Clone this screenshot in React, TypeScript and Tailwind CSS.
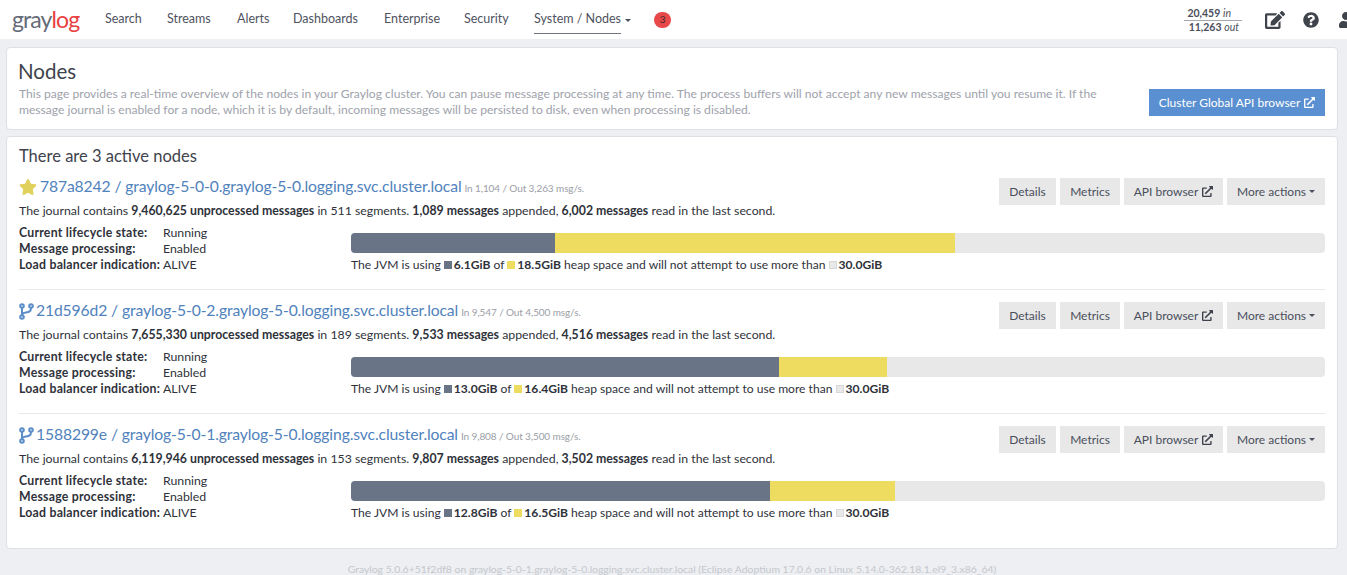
import { FaEdit, FaQuestionCircle, FaUser, FaStar, FaExternalLinkAlt } from "react-icons/fa";

const navItems = [
  { label: "Search", w: "w-[62px]" },
  { label: "Streams", w: "w-[70px]" },
  { label: "Alerts", w: "w-[56px]" },
  { label: "Dashboards", w: "w-[91px]" },
  { label: "Enterprise", w: "w-[80px]" },
  { label: "Security", w: "w-[70px]" },
];

const nodes = [
  {
    id: "787a8242",
    host: "graylog-5-0-0.graylog-5-0.logging.svc.cluster.local",
    leader: true,
    rate: "In 1,104 / Out 3,263 msg/s.",
    unprocessed: "9,460,625",
    segments: "511",
    appended: "1,089",
    read: "6,002",
    used: "6.1GiB",
    committed: "18.5GiB",
    usedPct: 20.9,
    committedPct: 41.1,
  },
  {
    id: "21d596d2",
    host: "graylog-5-0-2.graylog-5-0.logging.svc.cluster.local",
    leader: false,
    rate: "In 9,547 / Out 4,500 msg/s.",
    unprocessed: "7,655,330",
    segments: "189",
    appended: "9,533",
    read: "4,516",
    used: "13.0GiB",
    committed: "16.4GiB",
    usedPct: 43.9,
    committedPct: 11.1,
  },
  {
    id: "1588299e",
    host: "graylog-5-0-1.graylog-5-0.logging.svc.cluster.local",
    leader: false,
    rate: "In 9,808 / Out 3,500 msg/s.",
    unprocessed: "6,119,946",
    segments: "153",
    appended: "9,807",
    read: "3,502",
    used: "12.8GiB",
    committed: "16.5GiB",
    usedPct: 43,
    committedPct: 12.9,
  },
];

const btn =
  "h-[27px] flex items-center justify-center bg-[#e8e8e8] text-[12px] text-[#4a4f5c] whitespace-nowrap";

const BranchIcon = () => (
  <svg viewBox="0 0 15 17" className="w-[15px] h-[17px] mr-[2px] self-center" fill="none" stroke="#5b8dc9" strokeWidth="2">
    <circle cx="3" cy="3" r="1.8" />
    <circle cx="3" cy="14" r="1.8" />
    <circle cx="12" cy="3" r="1.8" />
    <path d="M3 5v7M12 5c0 3.500-2 4-5 4.500-2 .3-4 .8-4 2.500" />
  </svg>
);

const Node = ({ node, last }: { node: (typeof nodes)[number]; last: boolean }) => (
  <div className={last ? "pt-[8px] h-[123px]" : "pt-[8px] h-[124px] border-b border-[#e8e8e8]"}>
    <div className="flex justify-between">
      <div>
        <div className="flex items-baseline h-[24px] mt-[1px]">
          {node.leader ? (
            <FaStar className="text-[#dfd15b] text-[18px] mr-[3px] self-center" />
          ) : (
            <BranchIcon />
          )}
          <span className="text-[15.7px] text-[#5082bc] tracking-[-0.12px]">
            {node.id} / {node.host}
          </span>
          <span className="text-[10px] text-[#9a9ea6] ml-[3px] tracking-[-0.1px]">{node.rate}</span>
        </div>
        <p className="text-[12.3px] leading-[18px] mt-[3px] text-[#2f323a] whitespace-nowrap">
          The journal contains <b>{node.unprocessed} unprocessed messages</b> in {node.segments} segments.{" "}
          <b>{node.appended} messages</b> appended, <b>{node.read} messages</b> read in the last second.
        </p>
      </div>
      <div className="flex gap-[4px] mt-[4px] shrink-0">
        <div className={`${btn} w-[57px]`}>Details</div>
        <div className={`${btn} w-[60px]`}>Metrics</div>
        <div className={`${btn} w-[99px]`}>
          API browser
          <FaExternalLinkAlt className="ml-[4px] text-[11px] text-[#3d414c]" />
        </div>
        <div className={`${btn} w-[98px]`}>
          More actions
          <span className="ml-[3px] border-x-[3px] border-t-[3px] border-x-transparent border-t-[#4a4f5c]" />
        </div>
      </div>
    </div>
    <div className="flex mt-[5px]">
      <div className="w-[332px] shrink-0 grid grid-cols-[144px_1fr] text-[12.3px] leading-[16px] text-[#2f323a] content-start whitespace-nowrap">
        <b className="tracking-[0.22px]">Current lifecycle state:</b>
        <span>Running</span>
        <b className="tracking-[0.22px]">Message processing:</b>
        <span>Enabled</span>
        <b className="tracking-[0.22px]">Load balancer indication:</b>
        <span>ALIVE</span>
      </div>
      <div className="flex-1 pt-[8px]">
        <div className="h-[20px] flex rounded-[4px] overflow-hidden bg-[#e8e8e8]">
          <div className="bg-[#697586]" style={{ width: `${node.usedPct}%` }} />
          <div className="bg-[#eedc60]" style={{ width: `${node.committedPct}%` }} />
        </div>
        <p className="mt-[3px] text-[12.1px] leading-[18px] text-[#2f323a] flex items-center whitespace-pre">
          The JVM is using <span className="w-[8px] h-[8px] mr-[2px] bg-[#697586]" />
          <b>{node.used}</b> of <span className="w-[8px] h-[8px] mr-[2px] bg-[#eedc60]" />
          <b>{node.committed}</b> heap space and will not attempt to use more than{" "}
          <span className="w-[8px] h-[8px] mr-[2px] bg-[#e8e8e8] border border-[#d8d8d8]" />
          <b>30.0GiB</b>
        </p>
      </div>
    </div>
  </div>
);

export default function App() {
  return (
    <div className="h-[575px] overflow-hidden bg-[#eeeff2] font-['Lato','Noto_Sans',sans-serif]">
      <nav className="h-[39px] bg-white flex items-center pl-[12px]">
        <span className="w-[93px] text-[23px] tracking-[-0.9px] text-[#656b78]">
          gray<span className="text-[#e8413f]">log</span>
        </span>
        {navItems.map((item) => (
          <span key={item.label} className={`${item.w} text-[12.5px] text-[#4f5361] whitespace-nowrap`}>
            {item.label}
          </span>
        ))}
        <span className="relative h-[39px] flex items-center text-[12.5px] text-[#4f5361] whitespace-nowrap">
          <span className="h-[29px] flex items-center border-b border-[#70747f]">System / Nodes</span>
          <span className="ml-[4px] mt-[2px] border-x-[3px] border-t-[3px] border-x-transparent border-t-[#4a4f5c]" />
        </span>
        <span className="ml-[23px] w-[17px] h-[16px] rounded-[8px] bg-[#e8484a] flex items-center justify-center text-[10px] text-[#3a2a2e]">
          3
        </span>
        <div className="ml-auto flex items-center">
          <div className="w-[58px] text-[10.5px] leading-[12px] text-[#4a4f5c] text-right mr-[23px]">
            <div className="border-b border-[#a5a8b0] pb-[1px] pr-[11px]">
              <b>20,459</b> <i>in</i>
            </div>
            <div className="pr-[3px]">
              <b>11,263</b> <i>out</i>
            </div>
          </div>
          <FaEdit className="text-[18px] text-[#3e434c] w-[20px] mr-[18px]" />
          <FaQuestionCircle className="text-[16px] text-[#3e434c] mr-[19px]" />
          <div className="w-[9px] overflow-hidden">
            <FaUser className="text-[16px] text-[#3e434c]" />
          </div>
        </div>
      </nav>

      <main className="pl-[6px] pr-[9px] pt-[8px]">
        <section className="h-[83px] bg-white rounded-[4px] border border-[#dcdfe4] px-[12px] flex justify-between">
          <div className="w-[1085px] pt-[11px]">
            <h1 className="text-[20.5px] leading-[24px] ml-[-1px] text-[#3e434c]">Nodes</h1>
            <p className="text-[12.1px] leading-[16px] mt-[3px] text-[#9ea2ab]">
              This page provides a real-time overview of the nodes in your Graylog cluster. You can pause message
              processing at any time. The process buffers will not accept any new messages until you resume it. If the
              message journal is enabled for a node, which it is by default, incoming messages will be persisted to
              disk, even when processing is disabled.
            </p>
          </div>
          <div className="h-[27px] w-[176px] self-end mb-[13px] bg-[#5a90d1] text-white text-[12px] flex items-center justify-center whitespace-nowrap">
            Cluster Global API browser
            <FaExternalLinkAlt className="ml-[4px] text-[11px]" />
          </div>
        </section>

        <section className="mt-[6px] h-[413px] bg-white rounded-[4px] border border-[#dcdfe4] px-[12px] pt-[9px]">
          <h2 className="text-[16.5px] leading-[21px] text-[#3e434c]">There are 3 active nodes</h2>
          <div className="mt-[-1px]">
            {nodes.map((node, i) => (
              <Node key={node.id} node={node} last={i === nodes.length - 1} />
            ))}
          </div>
        </section>

        <footer className="mt-[13px] text-center text-[10.4px] leading-[14px] text-[#c4c7cd] whitespace-nowrap">
          Graylog 5.0.6+51f2df8 on graylog-5-0-1.graylog-5-0.logging.svc.cluster.local (Eclipse Adoptium 17.0.6 on Linux
          5.14.0-362.18.1.el9_3.x86_64)
        </footer>
      </main>
    </div>
  );
}
